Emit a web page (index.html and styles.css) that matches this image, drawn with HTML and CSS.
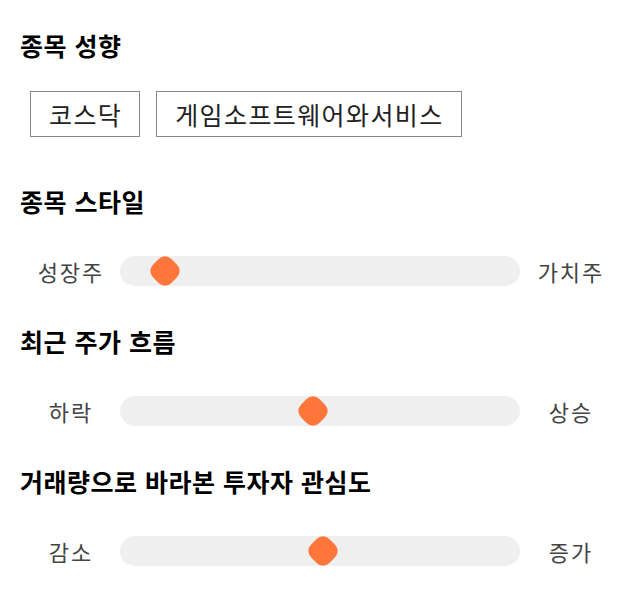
FILE: index.html
```html
<!DOCTYPE html>
<html lang="ko">
<head>
    <meta charset="UTF-8">
    <meta name="viewport" content="width=device-width, initial-scale=1.0">
    <title>종목 분석</title>
    <link rel="stylesheet" href="styles.css">
</head>
<body>
    <div class="panel">
        <!-- 종목 성향 -->
        <section class="section">
            <h2 class="section-title">종목 성향</h2>
            <div class="tag-list">
                <span class="tag">코스닥</span>
                <span class="tag">게임소프트웨어와서비스</span>
            </div>
        </section>

        <!-- 종목 스타일 -->
        <section class="section">
            <h2 class="section-title">종목 스타일</h2>
            <div class="scale">
                <span class="scale-label">성장주</span>
                <div class="scale-track">
                    <span class="scale-thumb" style="left: 11.25%;"></span>
                </div>
                <span class="scale-label">가치주</span>
            </div>
        </section>

        <!-- 최근 주가 흐름 -->
        <section class="section">
            <h2 class="section-title">최근 주가 흐름</h2>
            <div class="scale">
                <span class="scale-label">하락</span>
                <div class="scale-track">
                    <span class="scale-thumb" style="left: 48.25%;"></span>
                </div>
                <span class="scale-label">상승</span>
            </div>
        </section>

        <!-- 거래량 -->
        <section class="section">
            <h2 class="section-title">거래량으로 바라본 투자자 관심도</h2>
            <div class="scale">
                <span class="scale-label">감소</span>
                <div class="scale-track">
                    <span class="scale-thumb" style="left: 50.75%;"></span>
                </div>
                <span class="scale-label">증가</span>
            </div>
        </section>
    </div>
</body>
</html>
```

FILE: styles.css
```css
body {
    margin: 0;
    background: #fff;
    font-family: "Noto Sans CJK KR", "Noto Sans", sans-serif;
    color: #111;
}

.panel {
    display: flex;
    flex-direction: column;
    gap: 40px;
    padding: 30px 20px 20px;
}

.section {
    display: flex;
    flex-direction: column;
    gap: 40px;
}

.section-title {
    margin: 0;
    font-size: 25px;
    font-weight: 700;
    line-height: 30px;
    letter-spacing: 0.5px;
    color: #000;
}

/* 종목 성향 태그 */
.tag-list {
    display: flex;
    gap: 16px;
    margin: -9px 0 9px;
    padding-left: 10px;
}

.tag {
    border: 1px solid #888;
    padding: 0 17px 0 18px;
    height: 44px;
    line-height: 44px;
    font-size: 25px;
    letter-spacing: 1.4px;
    color: #222;
}

/* 슬라이더 형태의 척도 */
.scale {
    display: flex;
    align-items: center;
    height: 30px;
}

.scale-label {
    width: 100px;
    padding-left: 2px;
    box-sizing: border-box;
    text-align: center;
    font-size: 22px;
    letter-spacing: 2px;
    color: #444;
}

.scale-track {
    position: relative;
    flex: 1;
    height: 30px;
    border-radius: 15px;
    background: #efefef;
}

.scale-thumb {
    position: absolute;
    top: 2px;
    width: 26px;
    height: 26px;
    margin-left: -13px;
    border-radius: 9px;
    background: #ff763b;
    transform: rotate(45deg);
}
```
